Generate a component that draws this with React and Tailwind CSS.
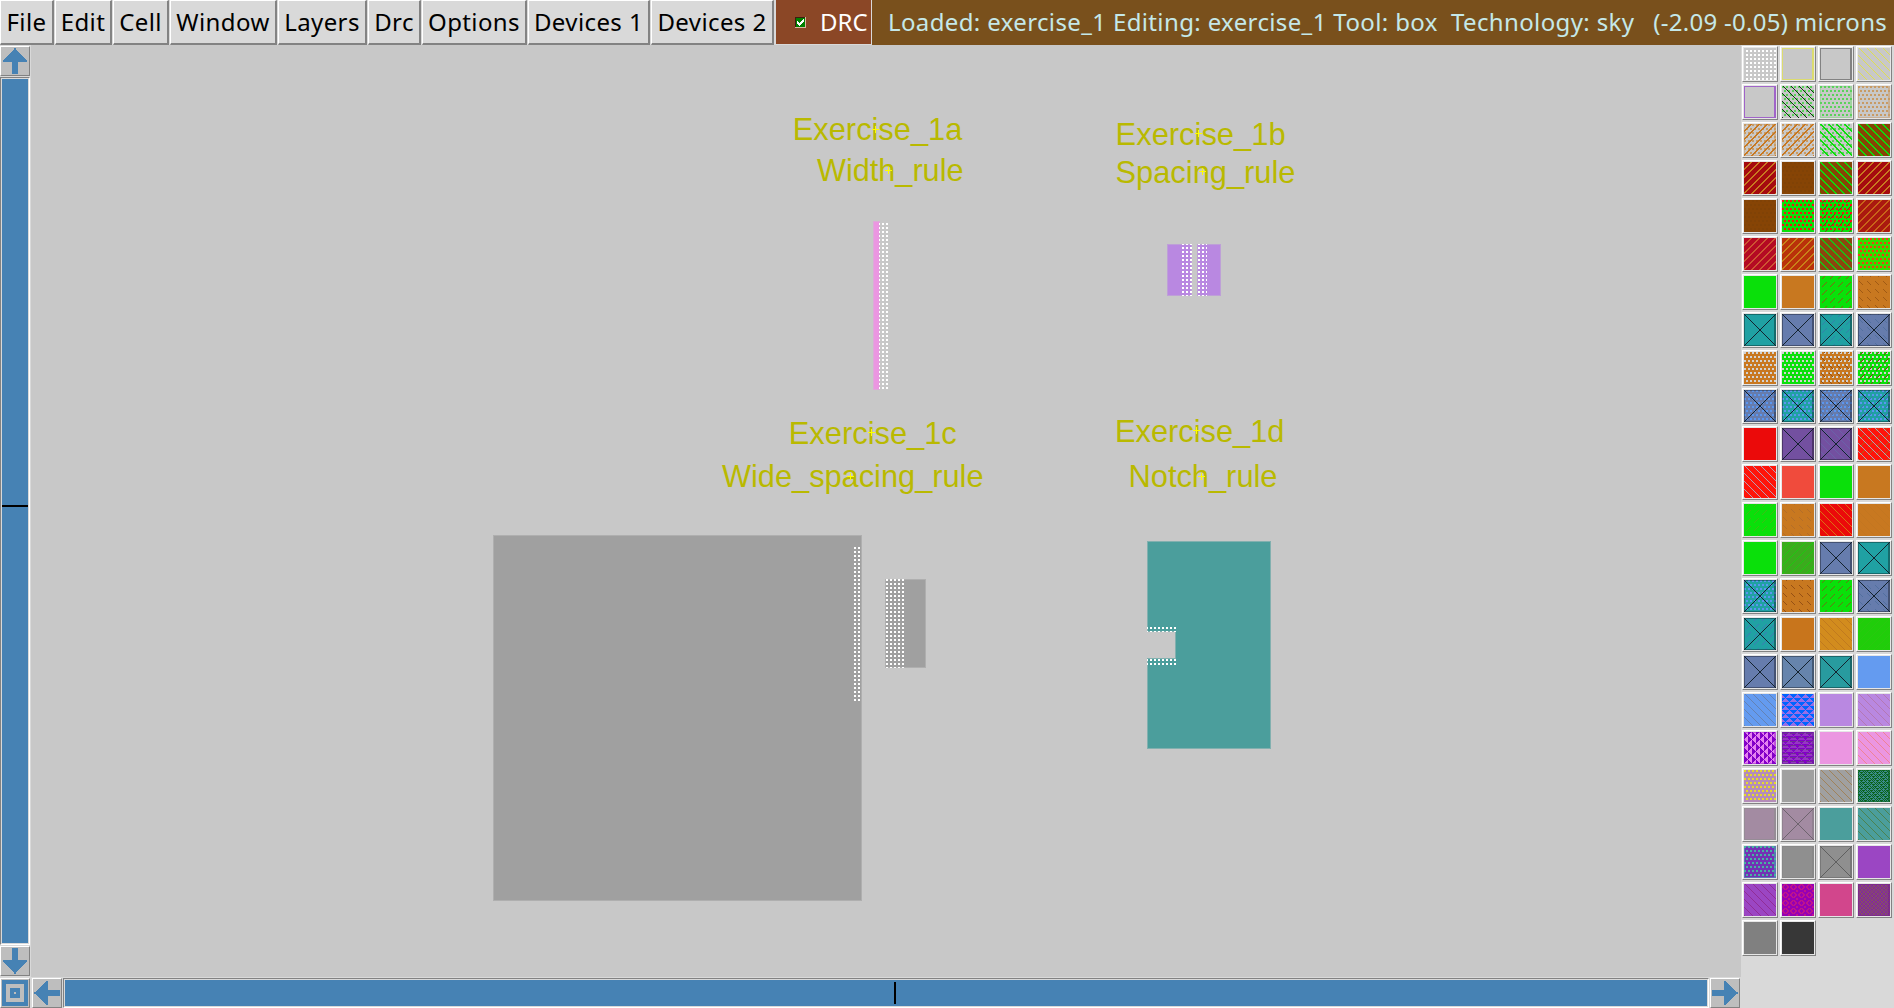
import React from "react";

const mod = (n, m) => ((n % m) + m) % m;
const TRI = ["11111110", "01111100", "00111000", "00010000", "11101111", "11000111", "10000011", "00000001"];
const RING = ["00111000", "01101100", "11000110", "11000110", "01101100", "00111000", "00000011", "00000011"];
const WEAVE = ["11101010", "01000101", "10111010", "00010001", "10101110", "01010100", "10101011", "00010001"];
const MESH = ["1001", "0110", "1010", "0101"];
const bit = (rows, x, y) => rows[mod(y, 8)][mod(x, 8)] === "1";

// Stipple bitmaps: each returns whether pixel (x, y) is painted.
const STIPPLES = {
  dots: (x, y) => mod(x - 2, 4) < 2 && mod(y - 2, 4) < 2,
  stag: (x, y) => mod(y, 4) < 2 && mod(x - (mod(y, 8) < 4 ? 0 : 2), 4) < 2,
  bs: (x, y) => mod(x - y, 8) === 1,
  BS: (x, y) => mod(x - y, 8) < 2,
  sl: (x, y) => mod(x + y, 8) === 7,
  SL: (x, y) => mod(x + y, 8) > 5,
  ds: (x, y) => mod(x + y, 8) === 4 && mod(x, 8) > 1 && mod(x, 8) < 7,
  db: (x, y) => mod(x - y, 8) === 4 && mod(x, 8) > 0 && mod(x, 8) < 5,
  tri: (x, y) => bit(TRI, x, y),
  vtri: (x, y) => bit(TRI, y, x),
  hl: (x, y) => mod(y, 4) === 1 && mod(x, 8) < 6,
  ring: (x, y) => bit(RING, x, y),
  weave: (x, y) => bit(WEAVE, x, y),
  mesh: (x, y) => MESH[mod(y, 4)][mod(x, 4)] === "1",
};

function stipplePath(kind) {
  let d = "";
  for (let y = 0; y < 32; y++) {
    let x = 0;
    while (x < 32) {
      if (STIPPLES[kind](x, y)) {
        const s = x;
        while (x < 32 && STIPPLES[kind](x, y)) x++;
        d += `M${s} ${y}h${x - s}v1h${s - x}z`;
      } else x++;
    }
  }
  return d;
}
const PATHS = Object.fromEntries(Object.keys(STIPPLES).map((k) => [k, stipplePath(k)]));

const C = "#c8c8c8", G = "#0ae00a", O = "#c87820", BR = "#864405", T = "#20a1a3", B = "#667cad";
const R = "#a50a0f", V = "#7350a0", LG = "#5ad25a", LO = "#c89b64", SK = "#5a96f0";
const X = ["x", "#14222e"], XE = ["edge", "#00000055"];

const LAYERS = [
  [C, ["dots", "#fff"]], [C, ["edge", "#dcdc6e"]], [C, ["edge", "#828282"]], [C, ["bs", "#dfdf50"]],
  [C, ["edge", "#a064c8"]], [C, ["stag", LG], ["bs", "#143214"]], [C, ["edge", "#a0d2a0"], ["stag", LG]], [C, ["edge", "#c8b096"], ["stag", LO]],
  [C, ["edge", "#c8b096"], ["stag", LO], ["SL", O]], [C, ["stag", LO], ["SL", O]], [C, ["stag", LG], ["BS", G]], [BR, ["BS", "#0fdc0a"]],
  [R, ["SL", O]], [BR, ["stag", "#804206"]], [BR, ["BS", "#0fdc0a"]], [R, ["SL", O]],
  [BR, ["stag", "#804206"]], [G, ["stag", "#f01414"]], [G, ["stag", "#f01414"], ["ds", "#784614"]], ["#aa190f", ["SL", "#c86419"]],
  ["#b40a23", ["SL", "#cd5532"]], ["#b9320a", ["SL", "#c88219"]], ["#8c460f", ["BS", "#1ebe14"]], ["#32dc00", ["stag", "#f03c14"]],
  [G], [O], [G, ["ds", "#826414"]], [O, ["db", "#a05a14"]],
  [T, XE, X], [B, XE, X], [T, ["ds", "#3282aa"], XE, X], [B, ["db", "#5270a0"], XE, X],
  [O, ["stag", "#d2d2d2"]], [G, ["stag", "#d2d2d2"]], [O, ["stag", "#d2d2d2"], ["db", "#965014"]], [G, ["stag", "#d2d2d2"], ["ds", "#784614"]],
  [B, ["stag", SK], XE, X], [T, ["stag", SK], XE, X], [B, ["stag", SK], ["db", "#5270a0"], XE, X], [T, ["stag", SK], ["ds", "#3282aa"], XE, X],
  ["#eb0a0a"], [V, XE, X], [V, ["bs", "#6a62a8"], XE, X], ["#ff140a", ["ds", "#b45a14"], ["bs", "#b4a0b4"]],
  ["#ff140a", ["bs", "#b4a0b4"]], ["#f04b3c"], [G], [O],
  [G, ["ds", "#3cbe14"]], [O, ["db", "#b46e28"]], ["#eb0a0a", ["bs", "#dc6e14"]], [O, ["bs", "#c37620"]],
  [G], ["#3caa1e", ["sl", "#1ec80f"]], [B, XE, X], [T, XE, X],
  [T, ["stag", SK], XE, X], [O, ["db", "#965014"]], [G, ["ds", "#647814"]], [B, ["db", "#5270a0"], XE, X],
  [T, ["ds", "#3c7db4"], XE, X], ["#c8751c"], ["#d28c1e", ["bs", "#c07a1e"]], ["#20cd0a", ["sl", "#28c80f"]],
  [B, XE, X], ["#6684ac", XE, X], ["#289b9f", XE, X], ["#649bf0"],
  ["#649bf0", ["bs", "#6482b4"]], ["#966ee6", ["tri", "#0064ff"]], ["#b988e1"], ["#b988e1", ["bs", "#b478b4"]],
  ["#e682f0", ["edge", "#be50dc"], ["vtri", "#8200c8"]], ["#9637c3", ["tri", "#8200c8"], ["hl", "#6e3291"], ["edge", "#64288c88"]], ["#eb96e1"], ["#eb96e1", ["bs", "#f08296"]],
  ["#b48cb9", ["stag", "#e6dc28"]], ["#a0a0a0"], ["#a0a0a0", ["bs", "#a0825a"]], ["#3c8c8c", ["weave", "#0a641e"], ["edge", "#0a641e99"]],
  ["#a38ba2", ["edge", "#968c96"]], ["#a38ba2", ["edge", "#82788288"], ["x", "#6e646e"]], ["#4b9e9c"], ["#4b9e9c", ["bs", "#4b8250"]],
  ["#7332b4", ["edge", "#5a78b4"], ["stag", "#46b4a0"]], ["#8f8f8f", ["edge", "#888888"]], ["#8f8f8f", ["edge", "#787878"], ["x", "#5f5f5f"]], ["#9b46c3"],
  ["#9b46c3", ["bs", "#912d96"]], ["#9600b4", ["ring", "#be148c"]], ["#d2468c"], ["#87555f", ["mesh", "#8223a5"], ["edge", "#78238c99"]],
  ["#808080"], ["#373737"],
];

function Swatch({ spec }) {
  const [bg, ...marks] = spec;
  return (
    <div className="h-9 w-9 border border-t-white border-l-white border-r-[#828282] border-b-[#828282] bg-[#e6e6e6] p-px">
      <svg className="block h-8 w-8" viewBox="0 0 32 32" shapeRendering="crispEdges">
        <rect width="32" height="32" fill={bg} />
        {marks.map(([kind, color], i) => {
          if (kind === "edge") return <path key={i} fill={color} fillRule="evenodd" d="M0 0h32v32h-32zM1 1v30h29v-30z" />;
          if (kind === "x") return <path key={i} stroke={color} strokeWidth="1" d="M0 0L32 32M32 0L0 32" />;
          return <path key={i} fill={color} d={PATHS[kind]} />;
        })}
      </svg>
    </div>
  );
}

const MENUS = [
  ["File", "w-[54px]"], ["Edit", "w-[57px]"], ["Cell", "w-[56px]"], ["Window", "w-[107px]"], ["Layers", "w-[89px]"],
  ["Drc", "w-[53px]"], ["Options", "w-[105px]"], ["Devices 1", "w-[122px]"], ["Devices 2", "w-[123px]"],
];

const ROTATE = { up: "", down: "rotate-180", left: "-rotate-90", right: "rotate-90" };

function ArrowButton({ dir }) {
  return (
    <div className="h-[30px] w-[30px] shrink-0 border border-t-white border-l-white border-r-[#828282] border-b-[#828282] bg-[#bebebe]">
      <svg className={`block h-7 w-7 ${ROTATE[dir]}`} viewBox="0 0 28 28" shapeRendering="crispEdges">
        <path fill="#4682b4" d="M13 1h2v2h1v1h1v1h1v1h1v1h1v1h1v1h1v1h1v1h1v1h1v1h1v2h-9v12h-6v-12h-9v-2h1v-1h1v-1h1v-1h1v-1h1v-1h1v-1h1v-1h1v-1h1v-1h1v-1h1z" />
      </svg>
    </div>
  );
}

const LABELS = [
  ["Exercise_1a", 792.8, 140.3, 169.5, 875, 130],
  ["Width_rule", 817, 180.7, 146.5, 888, 171],
  ["Exercise_1b", 1115.6, 144.8, 170, 1198, 134],
  ["Spacing_rule", 1115.5, 182.5, 180, 1202, 172],
  ["Exercise_1c", 788.8, 443.7, 168, 871, 433],
  ["Wide_spacing_rule", 722, 487, 261.5, 850, 477],
  ["Exercise_1d", 1115, 442, 169.5, 1196, 431],
  ["Notch_rule", 1128.5, 487, 149, 1201, 477],
];

function Layout() {
  return (
    <svg className="block h-[932px] w-[1710px]" viewBox="31 45 1710 932" shapeRendering="crispEdges">
      <defs>
        <pattern id="err" x="2" y="3" width="4" height="4" patternUnits="userSpaceOnUse">
          <rect width="2" height="2" fill="#fff" />
        </pattern>
      </defs>
      <rect x="873.5" y="221.5" width="6" height="168" fill="#eb96e1" stroke="#dcaad7" />
      <rect x="879" y="222" width="10" height="167" fill="url(#err)" />
      <rect x="1167.5" y="244.5" width="24" height="51" fill="#b988e1" stroke="#bea0d7" />
      <rect x="1197.5" y="244.5" width="23" height="51" fill="#b988e1" stroke="#bea0d7" />
      <rect x="1182" y="244" width="10" height="52" fill="url(#err)" />
      <rect x="1197" y="244" width="10" height="52" fill="url(#err)" />
      <rect x="493.5" y="535.5" width="368" height="365" fill="#a0a0a0" stroke="#afafaf" />
      <rect x="853" y="547" width="8" height="154" fill="url(#err)" />
      <rect x="885.5" y="579.5" width="40" height="88" fill="#a0a0a0" stroke="#afafaf" />
      <rect x="886" y="579" width="19" height="89" fill="url(#err)" />
      <path d="M1147.5 541.5h123v207h-123v-90h28v-27h-28z" fill="#4b9e9c" stroke="#82b0af" />
      <rect x="1147" y="627" width="29" height="5" fill="url(#err)" />
      <rect x="1147" y="659" width="29" height="6" fill="url(#err)" />
      {LABELS.map(([t, x, y, w, cx, cy]) => (
        <g key={t}>
          <text x={x} y={y} textLength={w} lengthAdjust="spacingAndGlyphs" fontSize="31.5" fill="#b9b900" fontFamily="'Liberation Sans', sans-serif">{t}</text>
          <path d={`M${cx - 3} ${cy - 0.5}h7M${cx + 0.5} ${cy - 4}v7`} stroke="#ffff00" />
        </g>
      ))}
    </svg>
  );
}

export default function App() {
  return (
    <div className="flex h-[1008px] w-[1894px] flex-col overflow-hidden bg-[#d9d9d9] font-['Noto_Sans',sans-serif] text-[24px] leading-[43px] whitespace-pre">
      <div className="flex h-[45px] shrink-0">
        <div className="flex w-[776px] shrink-0 gap-px">
          {MENUS.map(([name, w]) => (
            <div key={name} className={`${w} flex h-[45px] shrink-0 items-start justify-center border-t border-r-2 border-b-2 border-l border-t-white border-r-[#828282] border-b-[#828282] border-l-white bg-[#d9d9d9] tracking-[0.4px] text-black`}>
              <span className="-mt-px">{name}</span>
            </div>
          ))}
        </div>
        <div className="flex h-[45px] w-[96px] shrink-0 items-start border-r border-b border-[#d9d9d9] bg-[#8b4726] pl-[19px] text-white">
          <svg className="mt-[17px] mr-[14px] h-[11px] w-[11px] shrink-0" viewBox="0 0 11 11" shapeRendering="crispEdges">
            <path fill="#d9b9a0" d="M0 0h11v11h-11z" />
            <path fill="#3c1e10" d="M0 0h10v10h-10z" />
            <path fill="#008000" d="M1 1h9v9h-9z" />
            <path fill="#fff" d="M2 4h1v1h1v1h1v-1h1v-1h1v-1h1v-1h1v3h-1v1h-1v1h-1v1h-1v1h-1v-1h-1v-1h-1z" />
          </svg>
          <span>DRC</span>
        </div>
        <div className="flex min-w-0 flex-1 items-start justify-between bg-[#79501c] pr-[7px] pl-4 text-[#c5e8e8]">
          <div className="tracking-[0.37px]">Loaded: exercise_1 Editing: exercise_1 Tool: box  Technology: sky</div>
          <div className="tracking-[0.27px]">(-2.09 -0.05) microns</div>
        </div>
      </div>
      <div className="flex h-[963px]">
        <div className="flex w-[31px] shrink-0 flex-col pt-px">
          <ArrowButton dir="up" />
          <div className="mt-px flex h-[868px] w-[30px] shrink-0 items-center border border-t-[#828282] border-r-white border-b-white border-l-[#828282] bg-[#d9d9d9] p-px">
            <div className="flex h-full w-full items-center bg-[#4682b4]">
              <div className="relative -top-[5px] h-0.5 w-full bg-black" />
            </div>
          </div>
          <div className="mt-px"><ArrowButton dir="down" /></div>
          <div className="mt-0.5 h-[30px] w-[30px] shrink-0 border border-t-white border-l-white border-r-[#828282] border-b-[#828282] bg-[#bebebe] p-px">
            <svg className="block h-[26px] w-[26px]" viewBox="0 0 26 26" shapeRendering="crispEdges">
              <path fill="#4682b4" fillRule="evenodd" d="M0 0h26v26h-26zM4 4v18h18v-18zM8 8h10v10h-10zM12 12v2h2v-2z" />
            </svg>
          </div>
        </div>
        <div className="flex w-[1710px] shrink-0 flex-col">
          <div className="h-[932px] shrink-0 bg-[#c8c8c8]"><Layout /></div>
          <div className="flex pt-px pl-px">
            <ArrowButton dir="left" />
            <div className="mx-px h-[30px] min-w-0 flex-1 border border-t-[#828282] border-r-white border-b-white border-l-[#828282] bg-[#d9d9d9] p-px">
              <div className="flex h-full w-full justify-center bg-[#4682b4] py-0.5">
                <div className="relative left-[9px] h-full w-0.5 bg-black" />
              </div>
            </div>
            <ArrowButton dir="right" />
            <div className="w-px" />
          </div>
        </div>
        <div className="grid w-[153px] grid-cols-[repeat(4,36px)] content-start gap-0.5 pt-px pl-px">
          {LAYERS.map((spec, i) => <Swatch key={i} spec={spec} />)}
        </div>
      </div>
    </div>
  );
}
